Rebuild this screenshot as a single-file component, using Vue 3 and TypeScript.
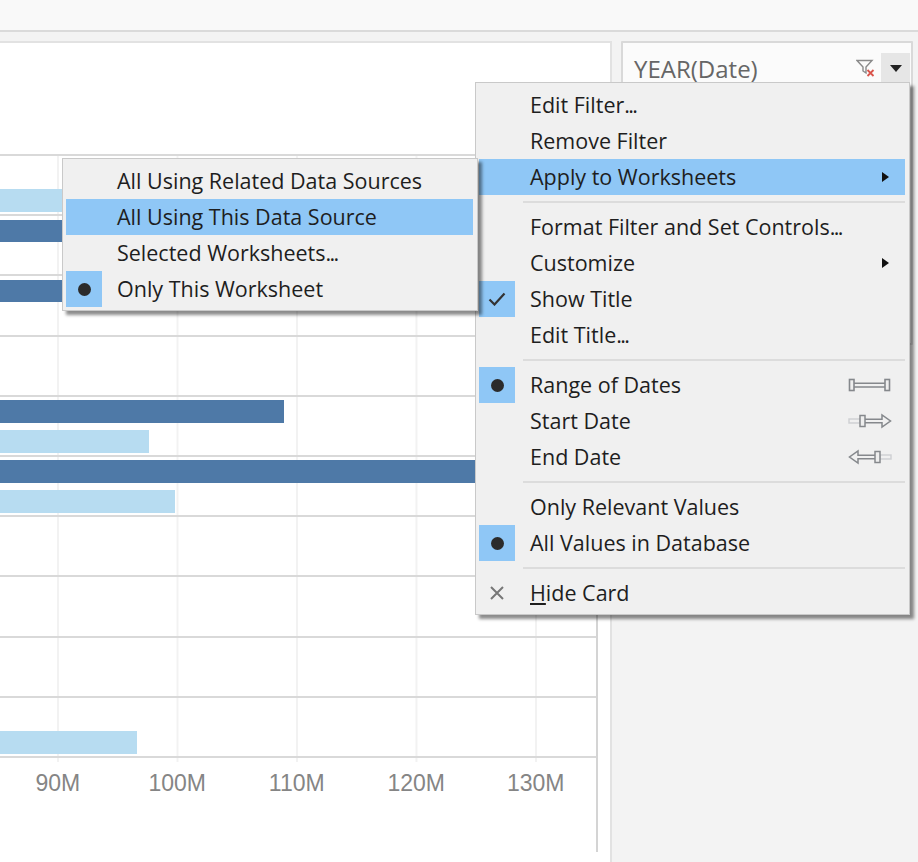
<script setup lang="ts">
interface Row {
  dark: number;
  light: number;
}

interface MenuItem {
  label: string;
  dots?: boolean;
  mark?: "check" | "dot" | "cross";
  arrow?: boolean;
  active?: boolean;
  slider?: "range" | "start" | "end";
}

const rows: Row[] = [
  { dark: 0, light: 300 },
  { dark: 500, light: 0 },
  { dark: 430, light: 0 },
  { dark: 0, light: 0 },
  { dark: 284, light: 149 },
  { dark: 560, light: 175 },
  { dark: 0, light: 0 },
  { dark: 0, light: 0 },
  { dark: 0, light: 0 },
  { dark: 0, light: 137 },
];

const ticks = ["90M", "100M", "110M", "120M", "130M"];

const subItems: MenuItem[] = [
  { label: "All Using Related Data Sources" },
  { label: "All Using This Data Source", active: true },
  { label: "Selected Worksheets", dots: true },
  { label: "Only This Worksheet", mark: "dot" },
];

const groups: MenuItem[][] = [
  [
    { label: "Edit Filter", dots: true },
    { label: "Remove Filter" },
    { label: "Apply to Worksheets", arrow: true, active: true },
  ],
  [
    { label: "Format Filter and Set Controls", dots: true },
    { label: "Customize", arrow: true },
    { label: "Show Title", mark: "check" },
    { label: "Edit Title", dots: true },
  ],
  [
    { label: "Range of Dates", mark: "dot", slider: "range" },
    { label: "Start Date", slider: "start" },
    { label: "End Date", slider: "end" },
  ],
  [
    { label: "Only Relevant Values" },
    { label: "All Values in Database", mark: "dot" },
  ],
];
</script>

<template>
  <div class="page">
    <div class="topbar"></div>
    <div class="main">
      <section class="sheet">
        <div class="plot">
          <div v-for="(row, i) in rows" :key="i" class="row">
            <div class="bar dark" :style="{ width: row.dark + 'px' }"></div>
            <div class="bar light" :style="{ width: row.light + 'px' }"></div>
          </div>
          <div class="axis">
            <span v-for="t in ticks" :key="t" class="tick">{{ t }}</span>
          </div>
        </div>
      </section>
      <aside class="side">
        <div class="card">
          <div class="card-head">
            <span class="card-title">YEAR(Date)</span>
            <svg class="filter-icon" width="20" height="18" viewBox="0 0 20 18">
              <path d="M1 1.5h15l-6 6.5v6L7 12V8z" fill="none" stroke="#8a8a8a" stroke-width="1.4" />
              <path d="M11.5 11l6 6m0-6l-6 6" stroke="#d9534a" stroke-width="1.8" />
            </svg>
            <button class="card-btn" type="button">
              <svg width="12" height="7" viewBox="0 0 12 7"><path d="M0 0h12L6 7z" fill="#222" /></svg>
            </button>
          </div>
        </div>
      </aside>
    </div>

    <div class="menu filter-menu">
      <template v-for="(group, g) in groups" :key="g">
        <div v-for="item in group" :key="item.label" class="item" :class="{ active: item.active }">
          <span class="mark" :class="{ on: item.mark }">
            <span v-if="item.mark === 'dot'" class="dot"></span>
            <svg v-if="item.mark === 'check'" width="18" height="14" viewBox="0 0 18 14">
              <path d="M1.5 7.5l5 5L16.5 1.5" fill="none" stroke="#333" stroke-width="2.2" />
            </svg>
          </span>
          <span class="label">{{ item.label }}<span v-if="item.dots" class="dots">...</span></span>
          <svg v-if="item.arrow" class="arrow" width="7" height="10" viewBox="0 0 7 10"><path d="M0 0l7 5-7 5z" fill="#111" /></svg>
          <svg v-if="item.slider" class="slider" width="44" height="16" viewBox="0 0 44 16">
            <g v-if="item.slider === 'range'" fill="none" stroke="#85888c" stroke-width="1.6">
              <path d="M6 6.2h31M6 10h31" />
              <rect x="1.5" y="2.5" width="4.5" height="11" fill="#eee" />
              <rect x="37" y="2.5" width="4.5" height="11" fill="#eee" />
            </g>
            <g v-if="item.slider === 'start'" fill="none" stroke-width="1.5">
              <rect x="1" y="6" width="11" height="4" stroke="#cfd1d4" />
              <path d="M17 6.2h17V2l8.5 6-8.5 6V9.8H17" stroke="#85888c" />
              <rect x="12" y="2.5" width="5" height="11" fill="#eee" stroke="#85888c" />
            </g>
            <g v-if="item.slider === 'end'" fill="none" stroke-width="1.5">
              <rect x="32" y="6" width="11" height="4" stroke="#cfd1d4" />
              <path d="M27 6.2H10V2L1.5 8l8.5 6V9.8h17" stroke="#85888c" />
              <rect x="27" y="2.5" width="5" height="11" fill="#eee" stroke="#85888c" />
            </g>
          </svg>
        </div>
        <div class="sep"></div>
      </template>
      <div class="item">
        <span class="mark">
          <svg width="16" height="16" viewBox="0 0 16 16"><path d="M2 2l12 12M14 2L2 14" stroke="#777" stroke-width="2" /></svg>
        </span>
        <span class="label"><u>H</u>ide Card</span>
      </div>
    </div>

    <div class="menu submenu">
      <div v-for="item in subItems" :key="item.label" class="item" :class="{ active: item.active }">
        <span class="mark" :class="{ on: item.mark }">
          <span v-if="item.mark === 'dot'" class="dot"></span>
        </span>
        <span class="label">{{ item.label }}<span v-if="item.dots" class="dots">...</span></span>
      </div>
    </div>
  </div>
</template>

<style>
html,
body {
  margin: 0;
  background: #f3f3f3;
}
</style>

<style scoped>
.page {
  position: relative;
  width: 918px;
  height: 862px;
  overflow: hidden;
  background: #f3f3f3;
  font-family: "Open Sans", "Liberation Sans", sans-serif;
}

.topbar {
  height: 30px;
  background: #f9f9f9;
  border-bottom: 2px solid #dadada;
}

.main {
  display: flex;
  height: 830px;
  padding-top: 9px;
  box-sizing: border-box;
}

/* chart */
.sheet {
  width: 612px;
  flex-shrink: 0;
  box-sizing: border-box;
  padding-top: 111px;
  background: #fff;
  border-top: 2px solid #e2e2e2;
  border-right: 2px solid #e2e2e2;
}

.plot {
  width: 598px;
  height: 698px;
  box-sizing: border-box;
  border-right: 2px solid #d4d4d4;
  background-image: linear-gradient(to right, #f2f2f2 2px, transparent 2px);
  background-size: 119.5px 608px;
  background-position: 57px 0;
  background-repeat: repeat-x;
}

.row {
  height: 60.2px;
  box-sizing: border-box;
  display: flex;
  flex-direction: column;
  gap: 7.5px;
  padding-top: 3.4px;
  border-top: 2px solid #d9d9d9;
}

.bar {
  height: 22.5px;
}

.dark {
  background: #4e79a7;
}

.light {
  background: #b7dcf1;
}

.axis {
  display: flex;
  height: 86px;
  box-sizing: border-box;
  margin-left: -2px;
  padding-top: 11px;
  border-top: 2px solid #d9d9d9;
}

.tick {
  width: 119.5px;
  text-align: center;
  font-family: "Liberation Sans", sans-serif;
  font-size: 23px;
  line-height: 28px;
  color: #858585;
}

/* filter card */
.side {
  flex: 1;
  padding: 0 5px 0 9px;
}

.card {
  height: 300px;
  background: #fbfbfb;
  border: 2px solid #d9d9d9;
  border-radius: 1px;
}

.card-head {
  display: flex;
  align-items: center;
  height: 40px;
  padding: 10px 1px 0 11px;
  box-sizing: border-box;
}

.card-title {
  flex: 1;
  font-size: 24px;
  color: #666;
}

.filter-icon {
  margin-right: 5px;
}

.card-btn {
  width: 29px;
  height: 30px;
  padding: 0;
  border: none;
  background: #e6e6e6;
  display: flex;
  align-items: center;
  justify-content: center;
}

/* menus */
.menu {
  position: absolute;
  box-sizing: border-box;
  background: #f0f0f0;
  border: 1px solid #c9c9c9;
  box-shadow: 4px 4px 3px rgba(0, 0, 0, 0.45);
  color: #1e1e1e;
}

.filter-menu {
  left: 475px;
  top: 82px;
  width: 435px;
  height: 533px;
  padding: 4px 4px 3px 3px;
}

.submenu {
  left: 62px;
  top: 158px;
  width: 416px;
  height: 153px;
  padding: 4px 4px 3px 3px;
}

.item {
  display: flex;
  align-items: center;
  height: 36px;
  font-size: 21.5px;
  white-space: nowrap;
}

.item.active {
  background: #8fc7f6;
}

.mark {
  width: 36px;
  height: 36px;
  flex-shrink: 0;
  margin-right: 15px;
  display: flex;
  align-items: center;
  justify-content: center;
}

.mark.on {
  background: #8fc7f6;
}

.dot {
  width: 13px;
  height: 13px;
  border-radius: 50%;
  background: #2b2b2b;
}

.label {
  flex: 1;
  margin-top: -2px;
}

.dots {
  letter-spacing: -1.6px;
}

.arrow {
  margin-right: 16px;
}

.slider {
  margin-right: 13px;
}

.sep {
  height: 2px;
  margin: 6px 0 6px 44px;
  background: #dcdcdc;
}
</style>
